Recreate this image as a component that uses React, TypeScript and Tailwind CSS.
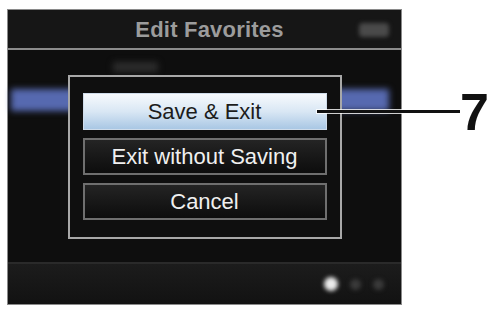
import React from "react";

const font = { fontFamily: '"Liberation Sans", Arial, sans-serif' };

function DialogButton({ label, active }: { label: string; active?: boolean }) {
  return (
    <div
      className={`flex h-[37px] items-center justify-center text-[22px] leading-none ${
        active
          ? "bg-gradient-to-b from-[#f7fafd] via-[#d9e7f4] to-[#a9c7e4] text-[#1c1c1c] border border-[#cfdcea]"
          : "bg-gradient-to-b from-[#242424] to-[#0d0d0d] text-[#f0f0f0] border-2 border-[#6f6f6f]"
      }`}
    >
      {label}
    </div>
  );
}

export default function App() {
  return (
    <div className="relative h-[310px] w-[490px] overflow-hidden bg-white" style={font}>
      {/* Camera screen */}
      <div className="ml-[7px] mt-[9px] flex h-[296px] w-[395px] flex-col border border-[#8a8a8a] bg-[#0e0e0e]">
        {/* Header */}
        <div className="relative flex h-[38px] items-center justify-center bg-[#161616] pl-[10px]">
          <span className="text-[22px] font-bold tracking-[0.2px] text-[#9c9c9c]">Edit Favorites</span>
          <div className="absolute right-[12px] top-[13px] h-[14px] w-[30px] rounded-sm bg-[#4a4a4a] blur-[2px]" />
        </div>
        <div className="h-[2px] bg-[#8c8c8c]" />

        {/* Body */}
        <div className="relative flex-1">
          {/* list behind the dialog */}
          <div className="absolute inset-0 flex flex-col">
            <div className="ml-[105px] mt-[12px] h-[10px] w-[45px] bg-[#2c2c2c] blur-[3px]" />
            <div className="ml-[3px] mt-[17px] h-[22px] w-[378px] bg-[#5669b0] blur-[3px]" />
          </div>

          <div className="relative mx-auto mt-[25px] flex w-[274px] flex-col gap-[8px] border-2 border-[#a8a8a8] bg-[#0f0f0f] px-[13px] pb-[17px] pt-[16px]">
            <DialogButton label="Save & Exit" active />
            <DialogButton label="Exit without Saving" />
            <DialogButton label="Cancel" />
          </div>
        </div>

        {/* Bottom bar */}
        <div className="flex h-[42px] items-center justify-end gap-[12px] border-t-2 border-[#2a2a2a] bg-gradient-to-b from-[#1c1c1c] to-[#121212] pr-[17px]">
          <div className="h-[14px] w-[14px] rounded-full bg-[#ececec] blur-[2px]" />
          <div className="h-[11px] w-[11px] rounded-full bg-[#3a3a3a] blur-[2px]" />
          <div className="h-[11px] w-[11px] rounded-full bg-[#3a3a3a] blur-[2px]" />
        </div>
      </div>

      {/* Callout */}
      <div className="absolute left-[317px] top-[110px] h-[3px] w-[143px] bg-[#111] shadow-[0_0_0_1px_rgba(255,255,255,0.8)]" />
      <div className="absolute left-[460px] top-[86px] text-[52px] font-bold leading-none text-[#111]">7</div>
    </div>
  );
}
